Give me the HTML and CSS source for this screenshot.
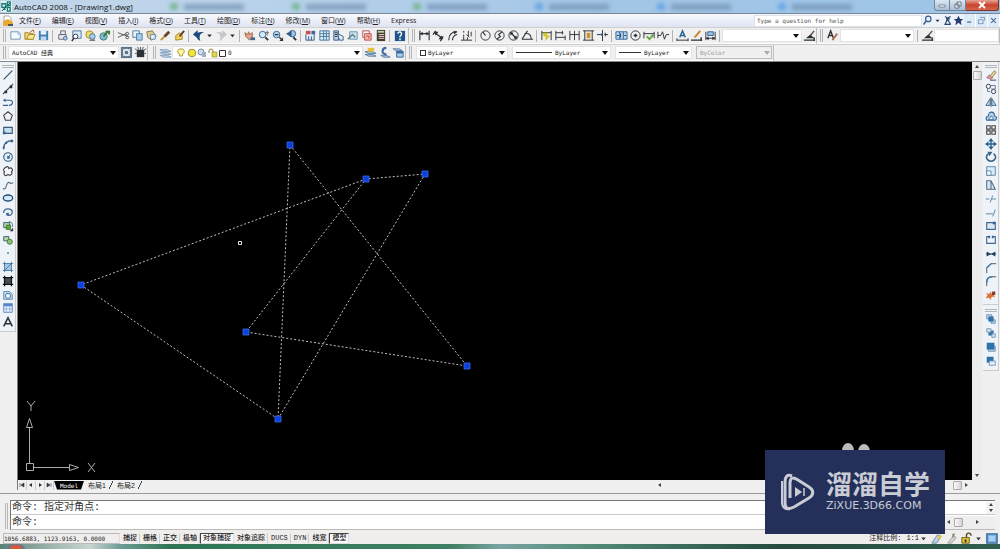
FILE: index.html
```html
<!DOCTYPE html>
<html lang="zh-CN">
<head>
<meta charset="utf-8">
<title>AutoCAD 2008 - [Drawing1.dwg]</title>
<link rel="stylesheet" href="styles.css">
</head>
<body>
<header class="titlebar">
  <div class="backdrop" aria-hidden="true">
    <i class="smear green"></i><i class="smear green"></i><i class="smear green"></i><i class="smear"></i><i class="smear"></i><i class="smear"></i>
  </div>
  <svg class="logo" viewBox="0 0 12 12"><path d="M0 0h12v12H0z" fill="#dff1ee"/><path d="M1 3h4v4H1zM7 1h3v4H7zM2 9h3M7 7h3v4H7z" fill="none" stroke="#167c78" stroke-width="1.5"/><path d="M1 11L10 2" stroke="#174a53"/></svg>
  <h1 class="title">AutoCAD 2008 - [Drawing1.dwg]</h1>
  <div class="window-buttons">
    <button class="win" aria-label="最小化"><svg viewBox="0 0 10 8"><path d="M2 4h6v2H2z" fill="#fff" stroke="#56687c" stroke-width=".7"/></svg></button>
    <button class="win" aria-label="还原"><svg viewBox="0 0 10 8"><path d="M4 1h4v4H4zM2 3h4v4H2z" fill="#fff" stroke="#56687c" stroke-width=".9"/></svg></button>
    <button class="win close" aria-label="关闭"><svg viewBox="0 0 10 8"><path d="M2 1l6 6M8 1L2 7" stroke="#fff" stroke-width="1.8"/></svg></button>
  </div>
</header>

<nav class="menubar">
  <svg class="doc-icon" viewBox="0 0 12 12"><path d="M2 1h5l2 2v5H2z" fill="#fff" stroke="#8a8a70" stroke-width=".7"/><path d="M1 6l5-2 5 3v4H1z" fill="#e6ae2e"/><path d="M6 9h5v2H6z" fill="#555"/></svg>
  <button class="menu">文件(<u>F</u>)</button><button class="menu">编辑(<u>E</u>)</button><button class="menu">视图(<u>V</u>)</button><button class="menu">插入(<u>I</u>)</button><button class="menu">格式(<u>O</u>)</button><button class="menu">工具(<u>T</u>)</button><button class="menu">绘图(<u>D</u>)</button><button class="menu">标注(<u>N</u>)</button><button class="menu">修改(<u>M</u>)</button><button class="menu">窗口(<u>W</u>)</button><button class="menu">帮助(<u>H</u>)</button><button class="menu">Express</button>
  <input class="ask" type="text" aria-label="Help" placeholder="Type a question for help">
  <div class="info-tools" data-tools="lens dd comm star"></div>
  <div class="doc-tools" data-tools="min restore x"></div>
</nav>

<div class="row">
  <div class="bar bar-standard">
    <i class="grip"></i>
    <div class="tools" data-tools="new open save | print preview publish dwf | cut copy paste match block | undo dd redo dd | pan zoomrt zoomwin zoomprev | props dcenter palettes sheet markup calc | help"></div>
  </div>
  <div class="bar bar-dimension">
    <i class="grip"></i>
    <div class="tools" data-tools="linear aligned arclen ordinate | radius jograd diameter angular | quick baseline continue space break | tol center inspect jogline | dimedit dimtext dimupdate |"></div>
    <div class="combo grow"><select aria-label="标注样式"><option></option></select></div>
    <div class="tools" data-tools="brush"></div>
  </div>
  <div class="bar grow">
    <i class="grip"></i>
    <div class="tools" data-tools="textstyle"></div>
    <div class="combo combo-style"><select aria-label="文字样式"><option></option></select></div>
    <div class="tools" data-tools="| brush"></div>
    <div class="combo open grow"><select aria-label="表格样式"><option></option></select></div>
  </div>
</div>

<div class="row">
  <div class="bar bar-workspace">
    <i class="grip"></i>
    <div class="combo grow"><select aria-label="工作空间"><option>AutoCAD 经典</option></select></div>
    <div class="tools" data-tools="gearbox home"></div>
  </div>
  <div class="bar bar-layers">
    <i class="grip"></i>
    <div class="tools" data-tools="layers"></div>
    <div class="combo grow">
      <svg class="layer-state" viewBox="0 0 50 12"><path d="M5 2a2.500 2.500 0 0 1 1.500 5v2h-3V7A2.500 2.500 0 0 1 5 2z" fill="#fff59a" stroke="#9b8b30" stroke-width=".8"/><circle cx="16" cy="6" r="3.800" fill="#f1e43c" stroke="#9b9437"/><circle cx="25" cy="5" r="3" fill="#d8dee8" stroke="#7488a0"/><path d="M26 5h4v5h-4z" fill="#9db0c6"/><path d="M33 6V4a2 2 0 0 1 4 0v2" fill="none" stroke="#8c7f36"/><path d="M36 5h5v5h-5z" fill="#e6d644" stroke="#8c7f36" stroke-width=".6"/><path d="M43.500 3.500h6v6h-6z" fill="#fff" stroke="#333"/></svg>
      <select aria-label="图层"><option>0</option></select>
    </div>
    <div class="tools" data-tools="layercur layerprev layerstate"></div>
  </div>
  <div class="bar bar-properties">
    <i class="grip"></i>
    <div class="combo combo-color"><i class="swatch"></i><select aria-label="颜色"><option>ByLayer</option></select></div>
    <div class="combo combo-linetype"><i class="rule"></i><select aria-label="线型"><option>ByLayer</option></select></div>
    <div class="combo combo-weight"><i class="rule"></i><select aria-label="线宽"><option>ByLayer</option></select></div>
    <div class="combo combo-plot disabled"><select aria-label="打印样式" disabled><option>ByColor</option></select></div>
  </div>
</div>

<main class="workspace">
  <aside class="rail">
    <div class="rail-box">
      <i class="grip flat"></i>
      <div class="stack draw" data-tools="line xline pline polygon rect arc circle cloud spline ellipse earc insert makeblock point hatch gradient region table text"></div>
    </div>
  </aside>
  <section class="document">
    <div class="view">
      <div class="canvas">
        <svg class="drawing" role="img" aria-label="Drawing1">
          <g transform="translate(-18 -62)">
            <path class="dashes" d="M290 145L467 366L246 332L366 179L425 174L278 419Z M366 179L81 285L278 419"/>
            <g class="grips"><path d="M287 142h6v6h-6zM464 363h6v6h-6zM243 329h6v6h-6zM363 176h6v6h-6zM422 171h6v6h-6zM275 416h6v6h-6zM78 282h6v6h-6z"/></g>
            <path class="wire" d="M238.500 241.500h3v3h-3z"/>
            <g class="wire ucs"><path d="M26.500 463.500h7v7h-7zM29.500 463v-36M33 467.500h36M26.500 427.500l3-9 3 9zM69.500 464.500l9 3-9 3zM27 401l4 5 4-5M31 406v5M88 463l7 9M95 463l-7 9"/></g>
            <path d="M842 451a6 8 0 0 1 12 0zM858 452a6 8 0 0 1 12 0z" fill="#bbb"/>
          </g>
        </svg>
      </div>
      <div class="vscroll"><button class="arrow up" aria-label="向上"></button><i class="thumb"></i><button class="arrow down" aria-label="向下"></button></div>
    </div>
    <div class="tabbar">
      <button class="nav" aria-label="第一个"><svg viewBox="0 0 8 8"><path d="M2 2v4M6 2v4L3 4z" fill="#333" stroke="#333" stroke-width=".6"/></svg></button><button class="nav" aria-label="上一个"><svg viewBox="0 0 8 8"><path d="M5 2v4L2 4z" fill="#333"/></svg></button><button class="nav" aria-label="下一个"><svg viewBox="0 0 8 8"><path d="M3 2v4l3-2z" fill="#333"/></svg></button><button class="nav" aria-label="最后一个"><svg viewBox="0 0 8 8"><path d="M6 2v4M2 2v4l3-2z" fill="#333" stroke="#333" stroke-width=".6"/></svg></button>
      <button class="tab active">Model</button><button class="tab">布局1</button><i class="slash"></i><button class="tab">布局2</button><i class="slash"></i>
      <div class="hscroll"><button class="arrow left" aria-label="向左"></button><i class="thumb"></i><button class="arrow right" aria-label="向右"></button></div>
    </div>
  </section>
  <aside class="rail right">
    <div class="rail-box">
      <i class="grip flat"></i>
      <div class="stack modify" data-tools="erase copyobj mirror offset array move rotate scale stretch trim extend breakpt breakobj join chamfer fillet explode"></div>
    </div>
    <div class="rail-box">
      <i class="grip flat"></i>
      <div class="stack order" data-tools="front back above under"></div>
    </div>
  </aside>
</main>

<section class="command">
  <i class="grip"></i>
  <div class="console">
    <div class="history"><p class="prompt">命令: 指定对角点:</p><div class="spin"><button class="arrow up" aria-label="向上"></button><button class="arrow down" aria-label="向下"></button></div></div>
    <div class="entry"><label class="prompt" for="cmd">命令:</label><input id="cmd" class="cmd" type="text"><div class="mini-scroll"><button class="arrow left" aria-label="向左"></button><i class="thumb"></i><button class="arrow right" aria-label="向右"></button></div></div>
  </div>
</section>

<footer class="status">
  <output class="coords">1056.6883, 1123.9163, 0.0000</output>
  <div class="modes"><button class="mode">捕捉</button><button class="mode">栅格</button><button class="mode">正交</button><button class="mode">极轴</button><button class="mode on">对象捕捉</button><button class="mode">对象追踪</button><button class="mode">DUCS</button><button class="mode">DYN</button><button class="mode">线宽</button><button class="mode on">模型</button></div>
  <div class="scale"><span>注释比例:</span><button class="ratio">1:1</button></div>
  <div class="tray" data-tools="dd annovis annoauto lock dd clean"></div>
</footer>
<div class="taskbar" aria-hidden="true"></div>

<div class="watermark">
  <svg class="mark" viewBox="0 0 36 38"><path d="M12 3C7 1 5 4 5 9v20c0 7 3 8 9 5l15-9c5-3 5-8 0-11L18 7c-6-4-8-2-8 4v14" fill="none" stroke="#c9ccd5" stroke-width="3"/><path d="M2 8v21c0 6 4 8 8 7" fill="none" stroke="#c9ccd5" stroke-width="2"/><path d="M15 14l7 5-7 5z" fill="#c9ccd5"/><path d="M24 15v8" stroke="#c9ccd5" stroke-width="1.500"/></svg>
  <div class="brand"><strong class="brand-name">溜溜自学</strong><span class="brand-site">ZiXUE.3D66.COM</span></div>
</div>
<script src="app.js"></script>
</body>
</html>
```
FILE: styles.css
```css
* { box-sizing: border-box; }
body {
  margin: 0;
  height: 100vh;
  display: flex;
  flex-direction: column;
  overflow: hidden;
  position: relative;
  background: #f0f0f0;
  color: #222;
  font: 7px/10px "Liberation Sans", "Noto Sans CJK SC", sans-serif;
}
button, input, select { font: inherit; color: inherit; margin: 0; padding: 0; border: 0; background: none; min-width: 0; }
select { appearance: none; flex: 1; outline: 0; opacity: 1; }
svg { display: block; }
.grow { flex: 1; }

.titlebar {
  position: relative;
  flex: none;
  height: 14px;
  display: flex;
  align-items: center;
  gap: 2px;
  border-bottom: 1px solid #7b8794;
  background: linear-gradient(90deg, #c3d6e9, #b9d2ea 25%, #a3c6e6 60%, #9dc4e8);
}
.logo { width: 11px; height: 11px; margin-left: 1px; }
.title { flex: 1; margin: 0; font: 8px/12px "Open Sans", sans-serif; color: #111; z-index: 1; }
.backdrop { position: absolute; inset: 2px 100px 2px 170px; display: flex; filter: blur(2px); overflow: hidden; }
.smear { flex: 1; display: flex; align-items: center; gap: 6px; }
.smear::before { content: ""; width: 8px; height: 7px; border-radius: 5px; background: #62a3e4; }
.smear.green::before { background: #75b58c; }
.smear::after { content: ""; width: 60px; height: 6px; background: #708fb0; opacity: .7; }
.window-buttons { display: flex; align-self: flex-start; margin-right: 1px; z-index: 1; }
.win { width: 16px; height: 11px; display: grid; place-items: center; border: 1px solid #71869d; border-top: 0; background: linear-gradient(#dbe7f3, #a9bfd6); border-radius: 0 0 0 3px; }
.win + .win { border-left: 0; border-radius: 0; }
.win.close { width: 33px; background: linear-gradient(#e7a496, #c8432c 50%, #d4664c); border-color: #803327; border-radius: 0 0 3px 0; }
.win svg { width: 10px; height: 8px; }

.menubar { flex: none; height: 13px; display: flex; align-items: center; background: linear-gradient(#f8f9fd, #dfe4f3); }
.doc-icon { width: 12px; height: 12px; margin: 0 0 0 2px; }
.menu { padding: 0 6px 0 5px; white-space: nowrap; font: 7px/12px "Open Sans", "Noto Sans CJK SC", sans-serif; }
.ask { flex: none; margin-left: auto; width: 168px; height: 12px; padding-left: 2px; background: #fff; font: 6px/12px "DejaVu Sans Mono", monospace; border: 1px solid #dde1ea; }
.ask::placeholder { color: #555; opacity: 1; }
.info-tools { display: flex; align-items: center; width: 42px; background: #eef2fb; }
.info-tools .tool { width: 11px; }
.info-tools .tool svg { width: 11px; }
.info-tools .tool.narrow { width: 9px; }
.info-tools .tool.narrow svg { width: 7px; }
.doc-tools { display: flex; align-items: center; width: 36px; }
.doc-tools .tool { width: 12px; background: #dcebfa; border-right: 1px solid #fff; }
.doc-tools .tool svg { width: 11px; }

.row { flex: none; height: 17px; display: flex; border-top: 1px solid #cfcfcf; background: #f0f0f0; }
.bar { display: flex; align-items: center; border-right: 1px solid #bdbdbd; border-bottom: 1px solid #fbfbfb; padding-left: 3px; }
.grip { flex: none; width: 3px; height: 13px; margin-right: 2px; border-left: 1px solid #b5b5b5; border-right: 1px solid #b5b5b5; }
.grip.flat { width: 12px; height: 3px; margin: 0; border: 0; border-top: 1px solid #b5b5b5; border-bottom: 1px solid #b5b5b5; }
.tools { display: flex; align-items: center; }
.tool { flex: none; width: 14px; height: 14px; display: grid; place-items: center; }
.tool svg { width: 13px; height: 13px; }
.tool.narrow { width: 9px; }
.tool.narrow svg { width: 9px; }
.split { flex: none; width: 1px; height: 12px; margin: 0 2px; background: #b3b3b3; }
.bar-standard { width: 409px; }
.bar-dimension { width: 408px; }
.bar-workspace { width: 148px; }
.bar-layers { width: 258px; padding-left: 5px; }
.bar-properties { width: 368px; gap: 4px; }
.bar-properties .grip { margin-right: 0; }
.combo { position: relative; flex: none; display: flex; align-items: center; height: 13px; padding: 0 10px 0 3px; background: #fff; border: 1px solid #e3e3e3; font: 6px/11px "DejaVu Sans Mono", "Noto Sans CJK SC", monospace; }
.combo.grow { flex: 1; }
.combo::after { content: ""; position: absolute; right: 2px; top: 4px; border: 3px solid transparent; border-top: 4px solid #111; border-bottom: 0; }
.combo select { height: 11px; }
.combo.open::after { content: none; }
.combo.disabled { background: #f0f0f0; border-color: #bbb; color: #999; }
.combo.disabled::after { border-top-color: #aaa; right: 1px; }
.combo-style { width: 74px; margin: 0 1px; }
.combo-color { width: 92px; }
.combo-linetype { width: 99px; }
.combo-weight { width: 77px; }
.combo-plot { width: 76px; }
.swatch { flex: none; width: 6px; height: 6px; margin-right: 2px; border: 1px solid #333; }
.rule { flex: none; width: 36px; height: 1px; margin-right: 3px; background: #333; }
.combo-weight .rule { width: 22px; }
.layer-state { width: 50px; height: 12px; margin-right: 2px; }

.workspace { flex: 1; min-height: 0; display: flex; border-top: 1px solid #888; }
.rail { flex: none; width: 17px; background: #f0f0f0; }
.rail-box { width: 16px; padding: 3px 1px 2px; display: flex; flex-direction: column; align-items: center; background: #eef3f9; border: 1px solid #ccc; border-top: 0; border-left: 0; }
.stack { display: flex; flex-direction: column; }
.stack .tool { flex: 1; min-height: 0; }
.stack .tool svg { width: 12px; height: 12px; }
.stack.draw { height: 261px; }
.stack.modify { height: 234px; }
.stack.order { height: 56px; }
.right .rail-box + .rail-box { padding-top: 4px; }
.document { flex: 1; min-width: 0; display: flex; flex-direction: column; border-left: 1px solid #777; }
.view { flex: 1; min-height: 0; display: flex; }
.canvas { flex: 1; background: #000; overflow: hidden; }
.drawing { width: 100%; height: 100%; }
.dashes { fill: none; stroke: #d5d5d5; stroke-width: .9; stroke-dasharray: 2 2; }
.grips { fill: #0b3fe0; stroke: #3a6be8; stroke-width: .8; }
.wire { fill: none; stroke: #e0e0e0; }
.ucs { stroke: #bdbdbd; stroke-width: .9; }
.vscroll { width: 10px; display: flex; flex-direction: column; align-items: center; background: #ececec; margin-right: 1px; }
.arrow { flex: none; width: 9px; height: 9px; display: grid; place-items: center; }
.arrow::after { content: ""; border: 2px solid transparent; }
.arrow.up::after { border-bottom: 3px solid #444; border-top: 0; }
.arrow.down::after { border-top: 3px solid #444; border-bottom: 0; }
.arrow.left::after { border-right: 3px solid #444; border-left: 0; }
.arrow.right::after { border-left: 3px solid #444; border-right: 0; }
.arrow.down { margin-top: auto; }
.thumb { flex: none; width: 9px; height: 9px; background: linear-gradient(90deg, #fafafa, #d3d3d3); border: 1px solid #aaa; border-radius: 1px; }
.tabbar { flex: none; height: 10px; display: flex; align-items: center; background: #f0f0f0; }
.nav { width: 9px; height: 9px; border-right: 1px solid #ccc; }
.nav svg { width: 8px; height: 8px; }
.tab { padding: 0 3px 0 4px; height: 9px; line-height: 9px; white-space: nowrap; }
.tab.active { padding: 0 6px; background: #000; color: #fff; font: 6px/9px "DejaVu Sans Mono", monospace; clip-path: polygon(0 0, 100% 0, calc(100% - 3px) 100%, 3px 100%); }
.slash { width: 4px; height: 8px; background: linear-gradient(to bottom right, transparent 43%, #444 46%, #444 54%, transparent 57%); }
.hscroll { flex: none; display: flex; align-items: center; margin-left: auto; width: 34%; padding-right: 12px; }
.hscroll .thumb { margin-left: auto; }

.command { flex: none; display: flex; margin-top: 3px; padding: 1px 0 0 5px; border-top: 1px solid #999; background: #f0f0f0; }
.command .grip { height: 26px; margin-top: 8px; }
.console { flex: 1; margin: 5px 5px 0 0; border-top: 1px solid #777; border-left: 1px solid #777; border-bottom: 1px solid #bbb; }
.history, .entry { display: flex; align-items: center; height: 14px; background: #fff; }
.history { border-bottom: 1px solid #c9c9c9; }
.prompt { margin: 0 0 0 1px; font: 10px/13px "Liberation Mono", "Noto Sans CJK SC", monospace; color: #333; }
.cmd { flex: 1; height: 12px; outline: 0; }
.spin { margin-left: auto; display: flex; flex-direction: column; background: #f3f3f3; }
.spin .arrow { height: 6px; }
.mini-scroll { display: flex; align-items: center; width: 51px; height: 13px; background: #eee; }
.mini-scroll .thumb { margin-left: 1px; }
.mini-scroll .arrow.right { margin-left: 10px; }

.status { flex: none; height: 14px; display: flex; align-items: center; padding: 2px 2px 0 3px; background: #f0eeec; }
.coords { width: 117px; height: 11px; border: 1px solid #bbb; border-right-color: #ddd; font: 6px/9px "DejaVu Sans Mono", monospace; white-space: nowrap; }
.modes { display: flex; }
.mode { height: 11px; padding: 0 2px; border: 1px solid transparent; border-right-color: #ccc; font: 500 7px/9px "Liberation Mono", "Noto Sans CJK SC", monospace; white-space: nowrap; }
.mode.on { border-color: #444 #ddd #ddd #444; background: #fafafa; }
.scale { display: flex; gap: 5px; margin-left: auto; padding-top: 1px; white-space: nowrap; font: 7px/9px "Liberation Mono", "Noto Sans CJK SC", monospace; }
.tray { display: flex; align-items: center; gap: 1px; }
.taskbar { flex: none; height: 5px; background: radial-gradient(circle at 16px 8px, #d55b34 6px, #587ba0 9px, transparent 10px), linear-gradient(90deg, #5a8176 0, #a9bdb7 60px, #c8d4d0 90px, #6d9d96 120px, #2f7554 170px, #3e8063 45%, #78a4a2 50%, #4e8873 60%, #254b3e 78%, #315e4d 100%); }

.watermark { position: absolute; right: 55px; bottom: 15px; width: 180px; height: 84px; display: flex; align-items: center; gap: 10px; padding-left: 15px; background: #24305a; color: #c9ccd5; }
.mark { width: 36px; height: 38px; }
.brand { display: flex; flex-direction: column; }
.brand-name { font: 700 26px/34px "Noto Sans CJK SC", sans-serif; }
.brand-site { font: 11px/11px "DejaVu Sans", sans-serif; padding-bottom: 7px; }
```
FILE: app.js
```js
// Toolbar glyphs, each drawn on a 14 x 14 grid.
const D = '#2b2f36', B = '#2f6398', L = '#a9cdec', G = '#61a83c', Y = '#e8c23a';
const p = (d, stroke = D, fill = 'none', w = 1) => `<path d="${d}" fill="${fill}" stroke="${stroke}" stroke-width="${w}"/>`;
const f = (d, fill) => `<path d="${d}" fill="${fill}"/>`;
const c = (x, y, r, stroke = D, fill = 'none', w = 1) => `<circle cx="${x}" cy="${y}" r="${r}" fill="${fill}" stroke="${stroke}" stroke-width="${w}"/>`;

const icons = {
  new: p('M2 3h8l2 2v6H2z', '#6f93b5', '#f4faff') + f('M9 3l3 3H9z', '#9fc0dc'),
  open: p('M2 4h4l1 1h4v6H2z', '#a88722', '#f0d268') + p('M4 11l2-5h7l-2 5z', '#a88722', '#f8e69c') + p('M7 4l4-3 1 3', '#a35d2a'),
  save: f('M2 2h10v10H2z', '#3e7fb8') + f('M4 2h6v4H4z', '#e9f3fb') + f('M4 8h6v4H4z', '#bed8ec'),
  print: p('M5 2h5v4H5zM3 6h8v5H3z', '#667', '#e8ebf0') + c(10, 10, 2, '#4a6f96', L),
  preview: p('M3 2h9v8H3z', '#47779f', '#d8ebf8') + c(6, 8, 2.500, D, '#fff') + p('M4 10l-2 3', D, 'none', 1.500),
  publish: c(6, 6, 4, '#a98d27', '#f1da6c') + c(9, 8, 3, '#496f9d', L) + p('M6 12h6', D),
  dwf: c(6, 8, 4, '#3f8174', '#80b8d7') + p('M6 8l5-6M8 3h4v3', '#387838', 'none', 2),
  cut: p('M1 4l11 4M1 9l9-4', '#555') + c(11, 5, 1.500, '#555') + c(11, 9, 1.500, '#555'),
  copy: p('M2 2h7v7H2z', '#4f7ca2', '#eaf4fd') + p('M6 5h6v7H6z', '#4f7ca2', L),
  paste: p('M2 3l6-1 4 6-5 4-4-3z', '#867140', '#e1cd93') + p('M6 6h5v5H6z', '#6787a6', '#e7f1fa'),
  match: p('M2 12l4-4', '#bd9127', 'none', 2) + p('M6 8l5-5', '#65402b', 'none', 3),
  block: p('M3 12V7l4-3 3 3v4z', '#a78527', '#f0d15c') + p('M7 8l5-6', '#5b3b31', 'none', 2),
  undo: f('M1 6l5-5v3c3-1 5-1 7 0-4 0-6 3-4 9-4-2-4-4-3-6v3z', '#1e4a7c'),
  redo: f('M13 6L8 1v3C5 3 3 3 1 4c4 0 6 3 4 9 4-2 4-4 3-6v3z', '#c4c8cd'),
  pan: p('M3 8l-1-4 3 2 1-3 1 3 3-2v5l-3 3z', '#a1634a', '#e6a68b') + f('M8 9h5v3H8z', '#3d6798'),
  zoomrt: c(6, 6, 3.500, B, '#d5eafa') + p('M9 9l3 3', D, 'none', 2) + p('M11 2v5M9 4h4', '#666'),
  zoomwin: c(6, 6, 3.500, B, '#b8d8ef') + p('M4 6h4M9 9l2 2', D, 'none', 1.500) + f('M9 13h4V9z', D),
  zoomprev: c(8, 5, 3.500, B, '#9fc3e1') + f('M1 5l6-3v7z', '#355984') + p('M9 9l3 3', D, 'none', 2),
  props: f('M2 2h5v4H2z', '#c84e4c') + f('M8 2h4v4H8z', '#3f63a5') + p('M2 6v6h9V6M5 8v4M8 8v4', '#355984', '#dcecf8'),
  dcenter: p('M2 2h10v10H2zM2 5h10M6 2v10M9 2v10M2 8h10', '#43759d', '#e1effa'),
  palettes: p('M2 2h5v10H2z', '#355984', '#bcd8ee') + p('M6 5l6 3v4H8z', '#355984', '#e7f1fa') + p('M3 4h3M3 6h3M3 8h3', D),
  sheet: p('M4 3h8v8H4z', '#6391b5', '#cee3f3') + p('M2 11l5-5 3 3', '#5d7f72', 'none', 1.500),
  markup: p('M3 2h7v7H3z', '#b54848', '#fff') + p('M5 5h7v7H5z', '#c94646', '#f0b9b2') + p('M7 8c2-2 4 1 2 2', '#b22'),
  calc: f('M3 1h9v12H3z', '#49382c') + f('M4 2h7v2H4z', '#b8d2ab') + p('M5 6h6M5 8h6M5 10h6', '#e4ded6', 'none', 1),
  help: f('M2 2h11v11H2z', '#1e568d') + p('M5 5c1-3 5-2 4 1L7.500 8v1M7.500 10v2', '#fff', 'none', 1.500),
  dd: f('M2 6h5L4.500 9z', D),
  linear: p('M2 2v10M12 2v10M2 5h10', D, 'none', 1.200) + f('M2 5l3-2v4zM12 5L9 3v4z', D),
  aligned: p('M4 2L1 6M12 8l-3 5M3 4l8 6', D, 'none', 1.300) + f('M2 3l5 0-3 4zM12 11H7l3-4z', D),
  arclen: p('M3 12C3 6 6 3 12 3M7 12c0-3 1-5 5-6', D, 'none', 1.200) + f('M12 3L8 2l1 4z', D),
  ordinate: p('M1 12h12M4 12V6M4 4V2M9 8v-6M12 8V3M7 6l3 3M8 12V9', D),
  radius: c(7, 7, 5) + p('M7 7L4 3', D, 'none', 1.300),
  jograd: c(7, 7, 5) + p('M10 3L6 6l2 2-4 3', D, 'none', 1.200),
  diameter: c(7, 7, 5) + p('M4 4l6 6', D, 'none', 1.300) + f('M3 3l4 1-3 3zM11 11l-4-1 3-3z', D),
  angular: p('M1 11h12M1 11l6-9M4 5c5-1 7 2 7 6', D, 'none', 1.200),
  quick: p('M2 2v10M12 2v10M2 4h10', D) + f('M3 4h6l-2 3h4l-5 6V8H4z', '#d3c526'),
  baseline: p('M2 2v10M9 2v4M12 7v5M2 4h8M2 9h10', D),
  continue: p('M2 2v10M7 2v10M12 2v10M2 6h10', D),
  space: p('M1 2h12M1 12h12M3 2v10M11 2v10', D) + f('M5 4h4v6H5z', '#c9972a'),
  break: p('M1 6h4M9 6h4M7 1v12M10 4v4', D) + f('M4 6l3-2v4z', B),
  tol: p('M1 3h12v8H1zM5 3v8M9 3v8', B, '#b6d7ef') + p('M2 7h2M6 5v4M10 7h2', D),
  center: c(7, 7, 5) + p('M5 7h4M7 5v4', D, 'none', 1.500),
  inspect: p('M1 3v7M12 3v7M1 5h11', D) + p('M4 8l3 3 4-5', G, 'none', 2),
  jogline: p('M1 3v7M1 7h3l2-4 2 8 2-5h3', D),
  dimedit: p('M1 10v3M13 10v3M1 12h12', D) + p('M4 9l3-7 3 7M5 7h4', B, 'none', 1.500),
  dimtext: p('M1 12h12M12 9v4', D, 'none', 1.500) + p('M5 9l6-7', '#c78523', 'none', 2),
  dimupdate: p('M2 3v9M12 3v9M2 10h10', D) + p('M4 3h6v4H4z', B, '#9fc3e1') + f('M2 10l3-2v4zM12 10l-3-2v4z', D),
  brush: p('M1 12h12M12 9v4', D, 'none', 1.500) + f('M3 10l5-4 4 4z', '#24312a') + p('M8 7l4-5', '#5a5149', 'none', 1.500),
  textstyle: p('M2 10l3-8 3 8M3 7h4', D, 'none', 1.500) + p('M7 12l5-7', '#b36f50', 'none', 2),
  gearbox: f('M1 1h12v12H1z', '#5d7386') + c(7, 7, 3, '#dce9f2', 'none', 2) + p('M3 3l2 2M11 3L9 5M3 11l2-2M11 11L9 9', '#eee'),
  home: f('M3 4h8v8H3z', D) + p('M1 3l3 2M4 1l1 3M7 1v3M10 1L9 4M13 3l-3 2M1 8h2M11 8h2', '#555'),
  layers: p('M1 4h8l4 2H5zM1 7h8l4 2H5zM1 10h8l4 2H5z', '#829fc0', '#c7d9eb'),
  layercur: p('M1 6h8l4 2H5zM1 9h8l4 2H5z', '#5c7da3', '#b3cce2') + f('M4 2h7v4H4z', Y),
  layerprev: p('M3 10h6l4 2H6z', '#5c7da3', '#b3cce2') + p('M9 9C3 9 4 2 9 2', '#3b6aa1', 'none', 2.200),
  layerstate: p('M1 3h7l3 2H4z', '#5c7da3', '#b3cce2') + p('M5 6h7v6H5z', '#32679d', L) + f('M5 6h7v2H5z', '#32679d'),
  lens: c(8, 5, 3.500, '#3c5d93', '#e5effa', 1.500) + p('M5 8l-3 4', '#3c5d93', 'none', 2),
  comm: p('M5 5h5M3 12h8M7 5l-3 7M7 5l4 7M4 2l3 2 4-2', '#2a4770', 'none', 1.500),
  star: f('M7 1l2 4 4 0-3 3 1 5-4-3-4 3 1-5-3-3 4 0z', '#263d70'),
  min: p('M4 9h5', '#456485', 'none', 1.500),
  restore: p('M5 3h6v4M3 6h6v5H3z', '#6983a3'),
  x: p('M4 4l6 6M10 4l-6 6', '#54718f', 'none', 1.500),
  line: p('M2 12L12 2', '#34495e', 'none', 1.300),
  xline: p('M1 13L13 1', '#34495e', 'none', 1.300) + f('M3 9h3v3H3zM9 3h3v3H9z', D),
  pline: p('M1 11h6M3 5h6c5 0 4 6-1 6', '#3b6288', 'none', 1.300) + f('M4 3L1 5l3 2z', B),
  polygon: p('M7 2l5 4-2 6H4L2 6z', '#444', '#eef1f4', 1.300),
  rect: p('M2 4h10v7H2z', '#3c5975', '#c4ddf1', 1.300) + f('M1 9h3v3H1z', B),
  arc: p('M2 12C2 6 6 3 12 3', '#375d80', 'none', 1.300) + f('M10 2h3v3h-3zM1 10h2v3H1zM4 5h2v2H4z', B),
  circle: c(7, 7, 5, '#3a5f82', '#e2f0fa', 1.300) + f('M6 6h3v3H6z', B) + p('M7 7l3-3', B),
  cloud: p('M4 3c2-2 4-1 4 1 3-2 6 2 3 4 2 3-2 5-4 3-3 3-6 0-4-3-2-2-1-4 1-5z', '#444', '#f5f8fb', 1.300),
  spline: p('M1 11c5 3 3-7 7-7 2 0 2 3 5 0', '#5b7188', 'none', 1.300),
  ellipse: '<ellipse cx="7" cy="7" rx="5.500" ry="3.500" fill="#d6e9f7" stroke="#244f79" stroke-width="1.500"/>',
  earc: p('M2 8C1 2 12 2 12 7c0 4-4 5-6 3', '#41678b', 'none', 1.500) + f('M5 8h3v3H5z', B),
  insert: p('M2 3h7v6H2z', '#35566f', '#b5d5a1') + p('M5 6h5v5H5z', '#3c7031', G) + p('M8 2c4 0 5 3 4 6', B) + f('M9 13h4V9z', D),
  makeblock: p('M2 3h6v5H2z', '#35566f', '#b5d5a1') + c(9, 9, 3, '#3c7031', '#8cc27a'),
  point: f('M6 6h2v2H6z', '#24818a'),
  hatch: f('M3 3h8v8H3z', '#a7cae7') + p('M3 1v12M11 1v12M1 3h12M1 11h12M3 11l8-8', '#3c719c'),
  gradient: f('M3 3h8v8H3z', '#4a4f57') + p('M3 1v12M11 1v12M1 3h12M1 11h12', '#111', 'none', 1.500),
  region: p('M2 3h7l3 3v6H2z', '#5282ab', '#c9dff1') + c(7, 8, 3, '#35658f', '#edf5fc'),
  table: p('M2 2h10v10H2z', '#547bb4', '#eef5ff') + f('M2 2h10v3H2z', '#5484c8') + p('M2 8h10M5 5v7M9 5v7', '#8cacd6'),
  text: p('M2 12L7 2l5 10M4 9h6', D, 'none', 1.800),
  erase: p('M2 10l3-3 4 3-2 2z', '#a55c6c', '#e5a0a5') + p('M6 8l5-6 2 2-5 6z', '#8c7742', '#e7d79c') + p('M6 13h7', D),
  copyobj: c(4, 4, 2.500, D) + c(10, 10, 2.500, D) + p('M6 3h6v4H7M3 7v3h3', '#4e6f8c'),
  mirror: p('M6 3v8H1zM8 3v8h5z', '#365b7d', '#bed8ee') + p('M7 1v12', D, 'none', .7),
  offset: p('M2 12c-2-3 1-5 2-5 0-6 7-6 7 0 3 0 3 3 1 5z', '#386894', '#b2d2ed', 1.300) + p('M4 11c0-2 3-1 3-4 2 0 2 3 3 4z', '#386894', '#fff'),
  array: p('M2 2h4v4H2zM8 2h4v4H8zM2 8h4v4H2zM8 8h4v4H8z', '#444', '#f8f8f8', 1.300),
  move: p('M7 2v10M2 7h10', '#2c618e', 'none', 1.500) + f('M7 0l3 4H4zM7 14l3-4H4zM0 7l4-3v6zM14 7l-4-3v6z', '#2c618e'),
  rotate: p('M4 3c-5 4-1 9 3 9s8-5 3-9', '#3d6386', 'none', 1.800) + f('M3 1h6L5 6z', '#3d6386'),
  scale: p('M2 2h10v10H2z', '#4d7da5', '#d9eaf7') + p('M2 7h5v5H2z', '#4d7da5', '#fff'),
  stretch: p('M2 2h5l5 10H2zM7 2v10', '#526a81', '#d7e6f3', 1.200),
  trim: p('M1 7h4M8 7h5M6 11l3-8', '#507995'),
  extend: p('M1 8h8M9 11l3-8', '#507995'),
  breakpt: p('M2 3h10v8H2z', '#45678a', '#d8e8f5', 1.300) + f('M9 2h3v3H9z', B),
  breakobj: p('M5 3H2v8h10V3H9', '#45678a', 'none', 1.300) + f('M4 2h2v3H4zM8 2h2v3H8z', B),
  join: p('M1 7h12', D) + f('M2 4l5 3-5 3zM12 4L7 7l5 3z', '#243f59'),
  chamfer: p('M2 13V7l5-5h6', '#444') + p('M2 7l5-5', '#427cae', 'none', 1.800),
  fillet: p('M2 13V9c0-5 2-7 7-7h4', '#444') + p('M2 9c0-5 2-7 7-7', '#427cae', 'none', 1.800),
  explode: f('M1 4l4 2 1-3 2 3 4-4-2 5 2 2-4 0-2 4-1-3-4 1 2-4z', '#dc7134') + f('M8 3h4v4H8z', '#8a3f2b'),
  front: p('M2 2h6v5H2zM7 8h5v4H7z', '#7094b2', '#b6d0e4') + f('M4 4h6v6H4z', '#2e71ab'),
  back: f('M4 4h6v6H4z', '#2e71ab') + p('M2 2h5v4H2zM8 8h4v4H8z', '#7094b2', '#d4e4f0'),
  above: p('M4 6h8v6H4z', '#7094b2', '#b6d0e4') + f('M2 2h9v8H2z', '#2e71ab'),
  under: f('M2 2h8v7H2z', '#2e71ab') + p('M5 7h7v5H5z', '#7094b2', '#e1edf6'),
  annovis: p('M2 12l6-9 4 2-5 7z', '#668aa8', '#bdd5e4') + f('M7 7l5-5v5z', Y),
  annoauto: p('M3 12l6-8 3 2-5 6z', '#a0a0a0', '#d5d5d5') + f('M8 2h3l-3 5z', '#777'),
  lock: p('M7 6V3c1-3 5-2 5 1', '#4f4723', 'none', 1.500) + p('M2 6h8v6H2z', '#695c19', '#e7c834') + f('M5 8h2v3H5z', D),
  clean: p('M2 2h11v10H2z', '#356998', '#75aadf', 1.500) + f('M4 4h7v6H4z', '#a7cdf2')
};

document.querySelectorAll('[data-tools]').forEach(bar => {
  bar.innerHTML = bar.dataset.tools.split(' ').map(name => {
    if (name === '|') return '<i class="split"></i>';
    const narrow = name === 'dd';
    return `<button class="tool${narrow ? ' narrow' : ''}" aria-label="${name}"><svg viewBox="0 0 ${narrow ? 9 : 14} 14">${icons[name]}</svg></button>`;
  }).join('');
});
```
